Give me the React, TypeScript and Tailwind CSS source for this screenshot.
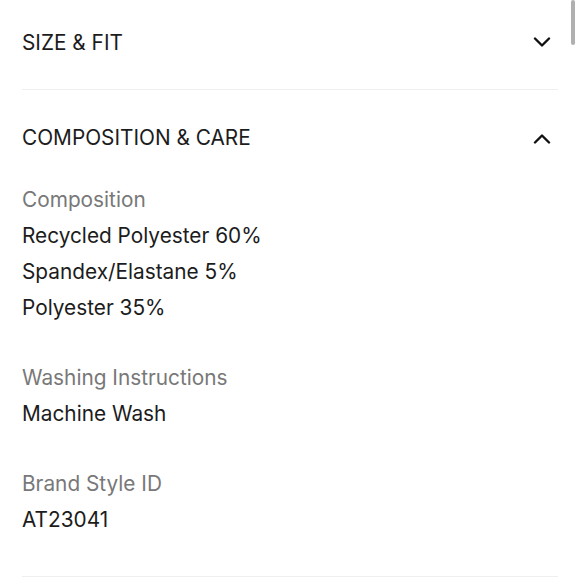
import { useState } from 'react';

function Chevron({ up }: { up?: boolean }) {
  return (
    <svg width="18" height="11" viewBox="0 0 18 11" className="shrink-0">
      <polyline
        points={up ? '2,9.5 9,2.5 16,9.5' : '2,1.5 9,8.5 16,1.5'}
        fill="none"
        stroke="#111"
        strokeWidth="2.4"
        strokeLinecap="round"
        strokeLinejoin="round"
      />
    </svg>
  );
}

export default function App() {
  const [sizeOpen, setSizeOpen] = useState(false);
  const [careOpen, setCareOpen] = useState(true);

  return (
    <div className="relative w-[580px] h-[580px] bg-white overflow-hidden text-[20.8px] text-[#1c1c1c]" style={{ fontFamily: 'Inter, "Liberation Sans", sans-serif' }}>
      <div className="absolute right-[5px] top-0 w-[4px] h-[45px] rounded-full bg-[#b0b0b0]" />

      <div className="px-[22px]">
        <button
          onClick={() => setSizeOpen(!sizeOpen)}
          className="w-full h-[90px] flex items-center justify-between border-b border-[#efefef] pr-[7px] pb-[4px]"
        >
          <span className="leading-[28px]">SIZE &amp; FIT</span>
          <Chevron up={sizeOpen} />
        </button>

        <div className="border-b border-[#efefef]">
          <button
            onClick={() => setCareOpen(!careOpen)}
            className="w-full pt-[34px] pb-[30px] flex items-center justify-between pr-[7px]"
          >
            <span className="leading-[28px]">COMPOSITION &amp; CARE</span>
            <Chevron up={careOpen} />
          </button>

          {careOpen && (
            <div className="leading-[36px] pb-[38px]">
              <div className="text-[#787878]">Composition</div>
              <div>Recycled Polyester 60%</div>
              <div>Spandex/Elastane 5%</div>
              <div>Polyester 35%</div>

              <div className="mt-[34px] text-[#787878]">Washing Instructions</div>
              <div>Machine Wash</div>

              <div className="mt-[34px] text-[#787878]">Brand Style ID</div>
              <div>AT23041</div>
            </div>
          )}
        </div>
      </div>
    </div>
  );
}
